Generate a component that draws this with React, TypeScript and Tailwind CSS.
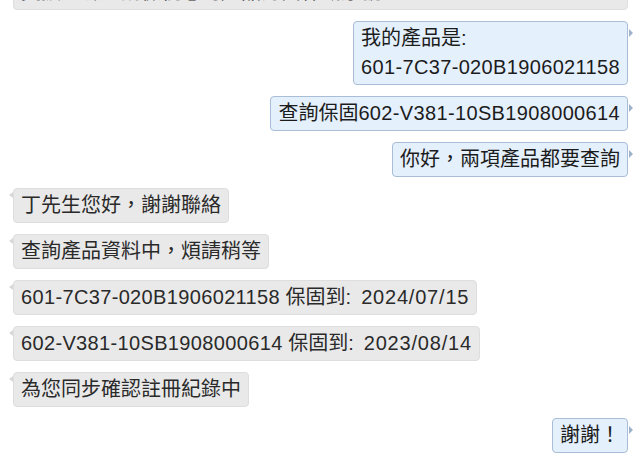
import React from "react";

type Msg = { me: boolean; lines: string[] };

const msgs: Msg[] = [
  { me: true, lines: ["我的產品是:", "601-7C37-020B1906021158"] },
  { me: true, lines: ["查詢保固602-V381-10SB1908000614"] },
  { me: true, lines: ["你好，兩項產品都要查詢"] },
  { me: false, lines: ["丁先生您好，謝謝聯絡"] },
  { me: false, lines: ["查詢產品資料中，煩請稍等"] },
  { me: false, lines: ["601-7C37-020B1906021158 保固到: 2024/07/15"] },
  { me: false, lines: ["602-V381-10SB1908000614 保固到: 2023/08/14"] },
  { me: false, lines: ["為您同步確認註冊紀錄中"] },
  { me: true, lines: ["謝謝！"] },
];

function Rich({ text }: { text: string }) {
  const parts = text.split(/(: [0-9/]+|[A-Za-z0-9\-/]+)/).filter((p) => p !== "");
  return (
    <>
      {parts.map((p, i) => {
        if (/^: [0-9/]+$/.test(p)) {
          return (
            <span key={i}>
              :<span className="ml-[10px] tracking-[0.8px]">{p.slice(2)}</span>
            </span>
          );
        }
        if (/^[A-Za-z0-9\-/]+$/.test(p)) {
          return (
            <span key={i} className="tracking-[0.35px]">
              {p}
            </span>
          );
        }
        return <span key={i}>{p}</span>;
      })}
    </>
  );
}

function Bubble({ m }: { m: Msg }) {
  if (m.me) {
    return (
      <div className="flex justify-end pr-[12px]">
        <div className="relative rounded-[4px] border border-[#a9bdd6] bg-[#e4f0fc] px-[7px] py-[2px] text-[20px] leading-[29px] text-[#1c1c1c]">
          {m.lines.map((l, i) => (
            <div key={i}>
              <Rich text={l} />
            </div>
          ))}
          <span className="absolute right-[-6px] top-[7px] h-0 w-0 border-y-[4px] border-l-[4px] border-y-transparent border-l-[#9fb2cc]" />
        </div>
      </div>
    );
  }
  return (
    <div className="flex justify-start pl-[13px]">
      <div className="relative rounded-[4px] border border-[#dedede] bg-[#e9e9e9] px-[7px] py-[2px] text-[20px] leading-[29px] text-[#2a2a2a]">
        {m.lines.map((l, i) => (
          <div key={i}>
            <Rich text={l} />
          </div>
        ))}
        <span className="absolute left-[-5px] top-[3px] h-0 w-0 border-y-[3px] border-r-[4px] border-y-transparent border-r-[#d8d8d8]" />
      </div>
    </div>
  );
}

export default function App() {
  return (
    <div
      className="h-[476px] w-[640px] overflow-hidden bg-white"
      style={{ fontFamily: '"Liberation Sans", "Noto Sans CJK TC", sans-serif' }}
    >
      <div className="-mt-[25px] flex flex-col gap-[11px]">
        <div className="pl-[13px] pr-[12px]">
          <div className="relative rounded-[4px] border border-[#dedede] bg-[#e9e9e9] px-[7px] py-[2px] text-[20px] leading-[29px] text-[#2a2a2a]">
            <div>支援經驗，請檢視您的產品背面標籤序號。</div>
          </div>
        </div>
        {msgs.map((m, i) => (
          <Bubble key={i} m={m} />
        ))}
      </div>
    </div>
  );
}
